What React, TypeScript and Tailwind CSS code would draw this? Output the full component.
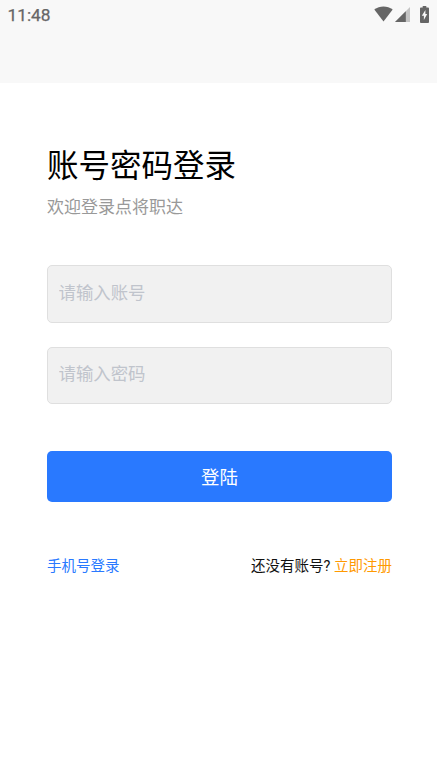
import React, { useState } from 'react'

interface FieldProps {
  type: string
  placeholder: string
  value: string
  onChange: (value: string) => void
  className?: string
}

const Field = ({ type, placeholder, value, onChange, className = '' }: FieldProps) => (
  <input
    type={type}
    placeholder={placeholder}
    value={value}
    onChange={(e) => onChange(e.target.value)}
    className={`block w-full rounded-[5px] border border-[#dfdfdf] bg-[#f1f1f1] px-[10.5px] text-[17.4px] text-black outline-none placeholder:text-[#c0c4cc] ${className}`}
  />
)

const StatusBar = () => (
  <div className="flex h-[30px] items-center justify-between pl-[7.5px] pr-2 text-[#666666]">
    <span className="pt-px font-[Roboto] text-[17.3px] font-normal leading-none [-webkit-text-stroke:0.25px_#666666]">11:48</span>
    <div className="flex items-center pb-[2px]">
      <svg width="19" height="16" viewBox="0 0 20 16" preserveAspectRatio="none" fill="currentColor">
        <path d="M10 15.5L.3 3.6C3.2 1.5 6.5.4 10 .4s6.8 1.1 9.700 3.200z" />
      </svg>
      <svg width="15" height="15" viewBox="0 0 16 16" className="ml-[2px] mt-[1px]">
        <path d="M16 0v16H0z" fill="#c4c4c4" />
        <path d="M11.5 4.5V16H0z" fill="currentColor" />
      </svg>
      <svg width="9" height="17" viewBox="0 0 10 17" preserveAspectRatio="none" fill="currentColor" className="ml-[10px]">
        <path fillRule="evenodd" d="M3 0h4v1.5h2q1 0 1 1V16q0 1-1 1H1q-1 0-1-1V2.5q0-1 1-1h2zM6 4L2 9.8h2.3V14L8 8H6z" />
      </svg>
    </div>
  </div>
)

export default function App() {
  const [account, setAccount] = useState('')
  const [password, setPassword] = useState('')

  return (
    <div className="min-h-screen bg-white font-[Roboto,'Noto_Sans_CJK_SC',sans-serif]">
      {/* Header */}
      <header className="h-[83px] bg-[#f8f8f8]">
        <StatusBar />
      </header>

      <main className="pl-[47px] pr-[45px] pt-[61px]">
        <h1 className="text-[31.5px] leading-[46px] text-black">账号密码登录</h1>
        <p className="mt-1 text-[17px] leading-[26px] text-[#999999]">欢迎登录点将职达</p>

        {/* Login form */}
        <form onSubmit={(e) => e.preventDefault()} className="mt-[45px]">
          <Field type="text" placeholder="请输入账号" value={account} onChange={setAccount} className="h-[58px] pb-[3px]" />
          <Field type="password" placeholder="请输入密码" value={password} onChange={setPassword} className="mt-6 h-[57px] pb-[4px]" />
          <button type="submit" className="mt-[46.5px] block h-[51.5px] w-full rounded-[5px] bg-[#2979ff] pt-[5px] text-[18.5px] text-white">
            登陆
          </button>
        </form>

        <div className="mt-[53px] flex justify-between pt-px text-[14.5px] leading-[22px]">
          <a href="#" className="text-[#2979ff]">手机号登录</a>
          <p className="text-[#111111]">
            还没有账号? <a href="#" className="text-[#ff9900]">立即注册</a>
          </p>
        </div>
      </main>
    </div>
  )
}
